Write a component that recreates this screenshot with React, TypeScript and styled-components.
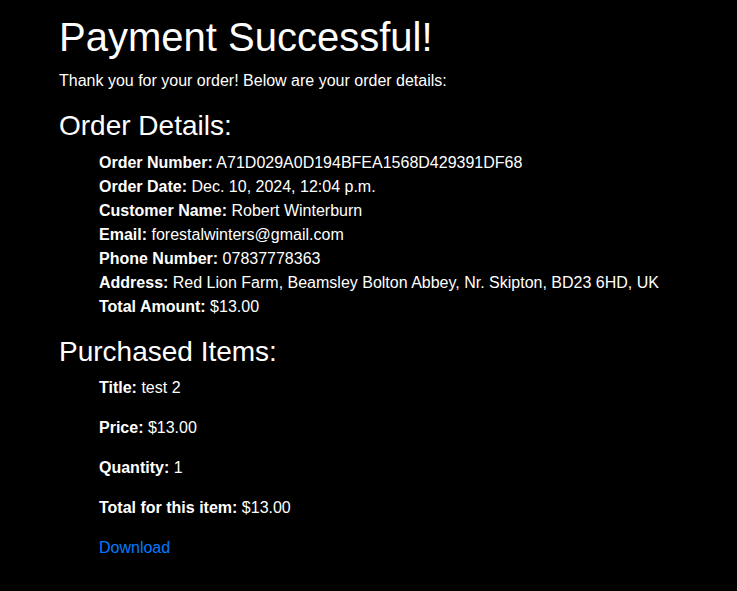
import React from "react";
import styled, { createGlobalStyle } from "styled-components";

const Global = createGlobalStyle`
  html, body {
    margin: 0;
    padding: 0;
    background: #000;
  }
  body {
    font-family: "Liberation Sans", Arial, sans-serif;
    font-size: 16px;
    line-height: 1.5;
    color: #fff;
  }
  * { box-sizing: border-box; }
`;

const Page = styled.main`
  padding: 13px 60px 20px 59px;
  min-height: 591px;
  background: #000;
`;

const Title = styled.h1`
  font-size: 40px;
  font-weight: 500;
  line-height: 1.2;
  margin: 0 0 8px 0;
`;

const Intro = styled.p`
  margin: 0 0 16px 0;
`;

const SectionTitle = styled.h3`
  font-size: 28px;
  font-weight: 500;
  line-height: 1.2;
  margin: 0 0 8px 0;
`;

const DetailList = styled.ul`
  list-style: none;
  margin: 0 0 16px 0;
  padding-left: 40px;
`;

const DetailItem = styled.li`
  line-height: 24px;
`;

const Label = styled.strong`
  font-weight: 700;
`;

const ItemPara = styled.p`
  margin: 0 0 16px 0;
`;

const DownloadLink = styled.a`
  color: #007bff;
  text-decoration: none;
`;

const details: [string, string][] = [
  ["Order Number", "A71D029A0D194BFEA1568D429391DF68"],
  ["Order Date", "Dec. 10, 2024, 12:04 p.m."],
  ["Customer Name", "Robert Winterburn"],
  ["Email", "forestalwinters@gmail.com"],
  ["Phone Number", "07837778363"],
  ["Address", "Red Lion Farm, Beamsley Bolton Abbey, Nr. Skipton, BD23 6HD, UK"],
  ["Total Amount", "$13.00"],
];

const itemFields: [string, string][] = [
  ["Title", "test 2"],
  ["Price", "$13.00"],
  ["Quantity", "1"],
  ["Total for this item", "$13.00"],
];

export default function App() {
  return (
    <>
      <Global />
      <Page>
        <Title>Payment Successful!</Title>
        <Intro>Thank you for your order! Below are your order details:</Intro>
        <SectionTitle>Order Details:</SectionTitle>
        <DetailList>
          {details.map(([k, v]) => (
            <DetailItem key={k}>
              <Label>{k}:</Label> {v}
            </DetailItem>
          ))}
        </DetailList>
        <SectionTitle>Purchased Items:</SectionTitle>
        <DetailList>
          <DetailItem>
            {itemFields.map(([k, v]) => (
              <ItemPara key={k}>
                <Label>{k}:</Label> {v}
              </ItemPara>
            ))}
            <ItemPara>
              <DownloadLink href="#">Download</DownloadLink>
            </ItemPara>
          </DetailItem>
        </DetailList>
      </Page>
    </>
  );
}
